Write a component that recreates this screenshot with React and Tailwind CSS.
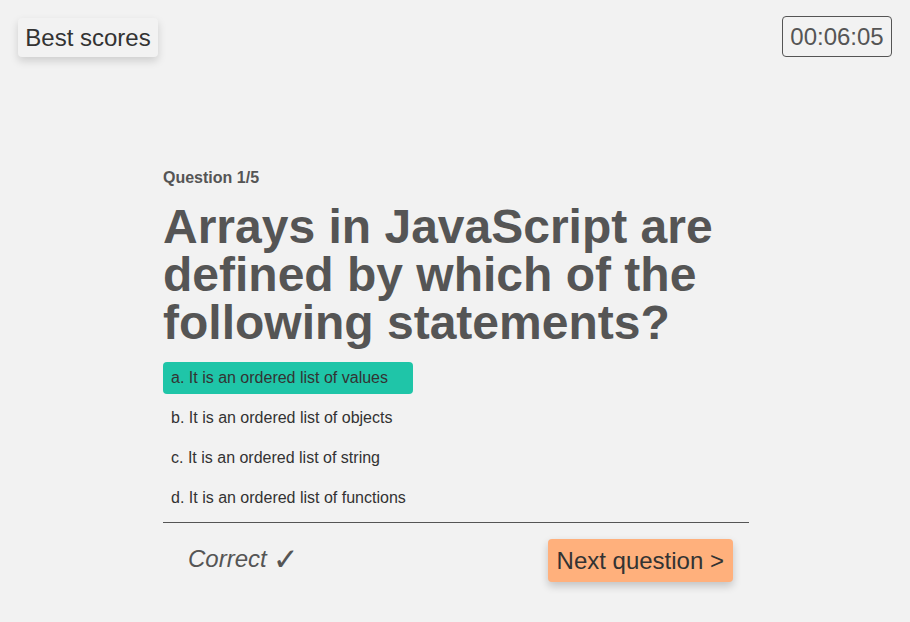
export default function App() {
  const options = [
    'a. It is an ordered list of values',
    'b. It is an ordered list of objects',
    'c. It is an ordered list of string',
    'd. It is an ordered list of functions',
  ];
  const selected = 0;

  return (
    <div className="min-h-[622px] bg-[#f2f2f2] font-['Liberation_Sans',Arial,sans-serif] text-[#333]">
      <div className="flex items-start justify-between pl-[18px] pr-[18px] pt-[16px]">
        <button className="mt-[2px] h-[39px] w-[140px] rounded-[4px] bg-[#f2f2f2] text-[24px] leading-none text-[#333] shadow-[0_4px_8px_rgba(0,0,0,0.15)]">
          Best scores
        </button>
        <div className="flex h-[41px] w-[110px] items-center justify-center rounded-[4px] border border-[#555] text-[24px] text-[#555]">
          00:06:05
        </div>
      </div>

      <div className="pl-[2px]">
        <div className="mx-auto mt-[112px] w-[586px]">
          <div className="text-[16px] font-bold leading-[18px] text-[#555]">Question 1/5</div>
          <h1 className="mt-[16px] text-[48px] font-bold leading-[48px] text-[#555]">
            Arrays in JavaScript are defined by which of the following statements?
          </h1>
          <div className="mt-[15px] flex flex-col gap-[8px]">
            {options.map((opt, i) => (
              <div
                key={opt}
                className={`flex h-[32px] w-fit min-w-[250px] items-center whitespace-nowrap rounded-[4px] px-[8px] text-[16px] text-[#333] ${i === selected ? 'bg-[#1fc5a8]' : ''}`}
              >
                {opt}
              </div>
            ))}
          </div>
          <div className="mt-[8px] border-t border-[#555]"></div>
          <div className="flex items-start justify-between pl-[25px] pr-[16px] pt-[16px]">
            <div className="mt-[8px] flex h-[24px] items-center text-[24px] italic leading-none text-[#555]">
              Correct
              <span className="ml-[6px] font-['DejaVu_Sans',sans-serif] text-[31px] font-bold not-italic">✓</span>
            </div>
            <button className="h-[43px] rounded-[4px] bg-[#ffb07c] px-[9px] text-[24px] leading-none text-[#333] shadow-[0_4px_8px_rgba(0,0,0,0.2)]">
              Next question &gt;
            </button>
          </div>
        </div>
      </div>
    </div>
  );
}
